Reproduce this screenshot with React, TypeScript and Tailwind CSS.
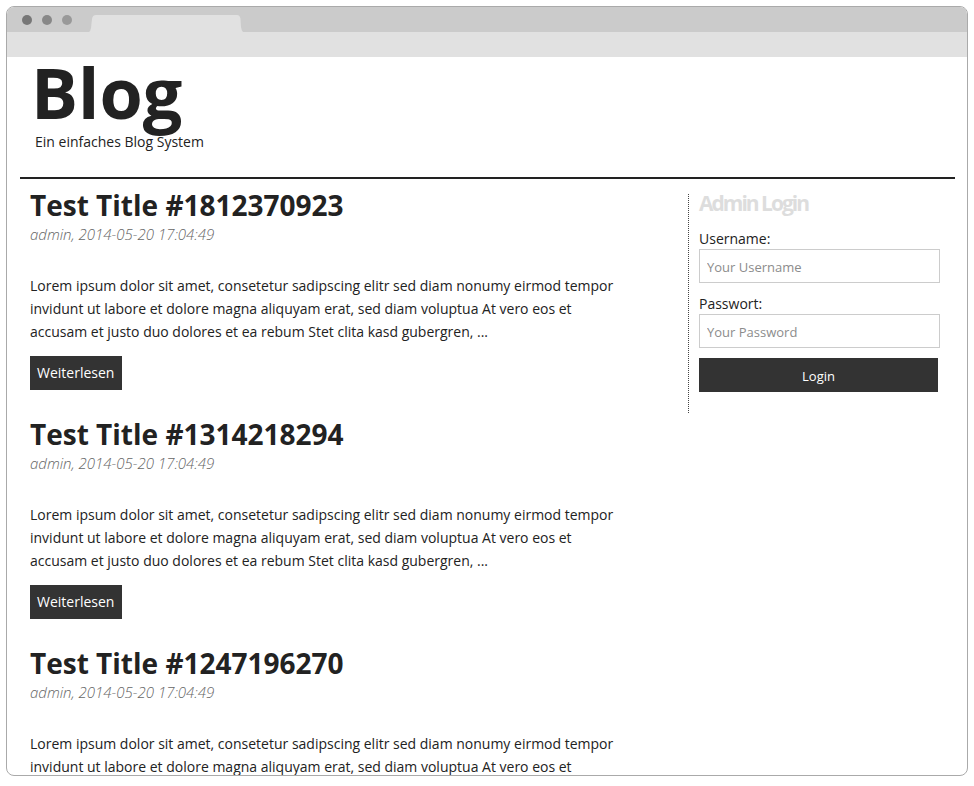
const posts = [
  { id: 1, title: 'Test Title #1812370923' },
  { id: 2, title: 'Test Title #1314218294' },
  { id: 3, title: 'Test Title #1247196270' },
];

function BrowserBar() {
  return (
    <div>
      <div className="flex h-[25px] items-end bg-[#cbcbcb] pl-[15px]">
        <div className="flex h-full items-center gap-[10px]">
          <span className="size-[10px] rounded-full bg-[#777777]" />
          <span className="size-[10px] rounded-full bg-[#888888]" />
          <span className="size-[10px] rounded-full bg-[#999999]" />
        </div>
        <svg className="ml-[17px] h-[17px] w-[154px]" viewBox="0 0 154 17" aria-hidden="true">
          <path d="M0 17Q1.500 16 2 13L3 4Q3.500 0 7 0H148Q151 0 151.500 4L152 12Q152.500 16 154 17Z" fill="#e1e1e1" />
        </svg>
      </div>
      <div className="h-[25px] bg-[#e1e1e1]" />
    </div>
  );
}

function Post({ title }: { title: string }) {
  return (
    <article className="mb-[25px]">
      <h2 className="text-[28px] leading-[38px] font-bold">{title}</h2>
      <p className="text-[15px] leading-[20px] font-light text-[#666666] italic">admin, 2014-05-20 17:04:49</p>
      <p className="mt-[30px] max-w-[600px] text-sm leading-[23px]">
        Lorem ipsum dolor sit amet, consetetur sadipscing elitr sed diam nonumy eirmod tempor invidunt ut labore et
        dolore magna aliquyam erat, sed diam voluptua At vero eos et accusam et justo duo dolores et ea rebum Stet clita
        kasd gubergren, ...
      </p>
      <a href="#weiterlesen" className="mt-[13px] inline-block bg-[#333333] py-[6px] pr-2 pl-[7px] text-sm leading-[22px] text-white">
        Weiterlesen
      </a>
    </article>
  );
}

function Login() {
  const field =
    'block h-[34px] w-full border border-[#cccccc] bg-white px-[7px] pt-[2px] text-[13px] text-[#222222] placeholder:text-[#8c8c8c]';
  return (
    <aside className="h-[219px] w-[252px] shrink-0 border-l border-dotted border-[#444444] pl-[10px]">
      <form onSubmit={(e) => e.preventDefault()}>
        <h3 className="text-[21px] leading-[18px] font-bold tracking-[-2px] text-[#dddddd]">Admin Login</h3>
        <label htmlFor="username" className="mt-4 block text-sm leading-[21px]">Username:</label>
        <input id="username" type="text" placeholder="Your Username" className={field} />
        <label htmlFor="password" className="mt-[10px] block text-sm leading-[21px]">Passwort:</label>
        <input id="password" type="password" placeholder="Your Password" className={field} />
        <button type="submit" className="mt-[10px] h-[34px] w-[239px] bg-[#333333] pt-[3px] text-[13px] text-white">Login</button>
      </form>
    </aside>
  );
}

export default function App() {
  return (
    <div className="h-screen bg-white px-[6px] pt-[6px] pb-[10px] font-['Open_Sans',sans-serif] text-[#222222]">
      <div className="h-full overflow-hidden rounded-lg border border-[#aaaaaa] bg-white">
        <BrowserBar />
        <div className="pr-3 pl-[13px]">
          <header className="h-[122px] border-b-2 border-[#222222] pl-[11px]">
            <h1 className="text-[70px] leading-[70px] font-bold">Blog</h1>
            <p className="pt-1 pl-1 text-sm leading-[22px]">Ein einfaches Blog System</p>
          </header>
          <div className="flex items-start justify-between pr-[15px] pl-[10px]">
            <main className="min-w-0 pt-[7px]">
              {posts.map((post) => (
                <Post key={post.id} title={post.title} />
              ))}
            </main>
            <div className="mt-[15px]">
              <Login />
            </div>
          </div>
        </div>
      </div>
    </div>
  );
}
